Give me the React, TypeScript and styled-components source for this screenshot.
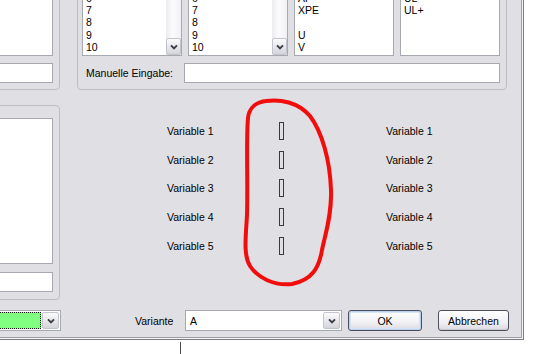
import React from "react";
import styled, { createGlobalStyle } from "styled-components";

const GlobalStyle = createGlobalStyle`
  html, body { margin: 0; padding: 0; background: #ffffff; }
  body {
    font-family: "Liberation Sans", Arial, sans-serif;
    font-size: 10.5px;
    color: #000;
  }
  #root { width: 537px; height: 354px; overflow: hidden; }
`;

const Page = styled.div`
  width: 537px;
  height: 354px;
  display: flex;
  flex-direction: column;
  overflow: hidden;
  background: #ffffff;
`;

const WindowFrame = styled.div`
  align-self: flex-start;
  padding: 0 1px 1px 0;
  background: #f4f4f6;
  border-right: 1px solid #7c7c82;
  border-bottom: 1px solid #7c7c82;
  flex-shrink: 0;
`;

const Dialog = styled.div`
  position: relative;
  width: 521px;
  height: 337px;
  overflow: hidden;
  background: #e0dfe3;
  border-right: 1px solid #9d9da5;
  border-bottom: 1px solid #9d9da5;
  display: flex;
  flex-direction: column;
`;

const TopSection = styled.div`
  display: flex;
  margin-top: -40px;
  height: 130px;
  flex-shrink: 0;
`;

const MiddleSection = styled.div`
  display: flex;
  margin-top: 15px;
  height: 195px;
  flex-shrink: 0;
`;

const BottomSection = styled.div`
  display: flex;
  align-items: center;
  margin-top: 10px;
  height: 21px;
  flex-shrink: 0;
`;

const GroupBox = styled.div<{ $padTop: number; $padBottom: number }>`
  box-sizing: border-box;
  border: 1px solid #bdbdc4;
  border-radius: 4px;
  display: flex;
  flex-direction: column;
  padding-top: ${(p) => p.$padTop}px;
  padding-bottom: ${(p) => p.$padBottom}px;
`;

const CutGroup = styled(GroupBox)<{ $gap: number }>`
  margin-left: -120px;
  width: 180px;
  padding-right: 6px;
  gap: ${(p) => p.$gap}px;
`;

const MainGroup = styled(GroupBox)`
  margin-left: 17px;
  width: 430px;
  padding-left: 4px;
  padding-right: 6px;
`;

const ListRow = styled.div`
  flex: 1;
  min-height: 0;
  display: grid;
  grid-template-columns: 100px 100px 100px 100px;
  column-gap: 6px;
`;

const ListBox = styled.div`
  box-sizing: border-box;
  display: flex;
  background: #ffffff;
  border: 1px solid #a6a9b0;
  overflow: hidden;
  min-height: 0;
  flex: 1;
`;

const ListItems = styled.div`
  flex: 1;
  display: flex;
  flex-direction: column;
  justify-content: flex-end;
  padding: 0 0 2px 3px;
`;

const Item = styled.div`
  height: 12.25px;
  line-height: 12.25px;
  white-space: pre;
`;

const ScrollTrack = styled.div`
  width: 15px;
  display: flex;
  flex-direction: column;
  justify-content: flex-end;
  background: linear-gradient(to right, #ececf0, #fbfbfc 45%, #f1f1f4);
`;

const ScrollButton = styled.div`
  box-sizing: border-box;
  height: 17px;
  border: 1px solid #c2c5cc;
  border-radius: 2px;
  background: linear-gradient(#fbfbfc, #e6e7ec 55%, #d3d5dc);
  display: flex;
  align-items: center;
  justify-content: center;
`;

const ManualRow = styled.div`
  display: grid;
  grid-template-columns: 102px 1fr;
  align-items: center;
  margin-top: 7px;
  height: 20px;
`;

const ManualLabel = styled.span`
  padding-left: 4px;
  white-space: nowrap;
`;

const TextField = styled.div`
  box-sizing: border-box;
  height: 20px;
  background: #ffffff;
  border: 1px solid #a6a9b0;
`;

const VariablesGrid = styled.div`
  display: grid;
  grid-template-columns: 112px 107px auto;
  grid-auto-rows: 28.75px;
  align-items: center;
  align-content: start;
  margin-left: 107px;
  padding-top: 11.6px;
`;

const VarLabel = styled.span`
  line-height: 12px;
  white-space: nowrap;
`;

const Pin = styled.div`
  box-sizing: border-box;
  width: 5px;
  height: 18px;
  border: 1px solid #3a3a3e;
  background: #e0dfe3;
`;

const ComboBox = styled.div<{ $width: number; $offset?: number }>`
  box-sizing: border-box;
  height: 21px;
  width: ${(p) => p.$width}px;
  margin-left: ${(p) => p.$offset ?? 0}px;
  border: 1px solid #a6a9b0;
  background: #ffffff;
  display: flex;
  padding: 1px;
  gap: 1px;
`;

const ComboField = styled.div<{ $green?: boolean }>`
  box-sizing: border-box;
  flex: 1;
  display: flex;
  align-items: center;
  padding-left: 3px;
  background: ${(p) => (p.$green ? "#80ff80" : "#ffffff")};
  border: ${(p) => (p.$green ? "1px dotted #1a1a1a" : "none")};
`;

const DropButton = styled.div`
  box-sizing: border-box;
  width: 17px;
  border: 1px solid #c2c5cc;
  border-radius: 2px;
  background: linear-gradient(#fbfbfc, #e6e7ec 55%, #d3d5dc);
  display: flex;
  align-items: center;
  justify-content: center;
`;

const FieldLabel = styled.span`
  width: 50px;
  margin-left: 74px;
  white-space: nowrap;
`;

const PushButton = styled.button<{ $width: number; $offset: number; $default?: boolean }>`
  box-sizing: border-box;
  height: 21px;
  width: ${(p) => p.$width}px;
  margin-left: ${(p) => p.$offset}px;
  padding: 0;
  font: inherit;
  color: #000;
  border: 1px solid #4f4f5c;
  border-radius: 3px;
  background: linear-gradient(#ffffff, #f1f1f4 60%, #d9d9e1);
  box-shadow: ${(p) =>
    p.$default ? "inset 0 0 0 1px #b9d1f0, inset 0 0 0 2px #d6e4f7" : "inset 0 -1px 0 #c9c9d2"};
`;

const Overlay = styled.svg`
  position: absolute;
  left: 0;
  top: 0;
  width: 521px;
  height: 337px;
  pointer-events: none;
`;

const Desktop = styled.div`
  flex: 1;
  display: flex;
`;

const BehindEdge = styled.div`
  width: 1px;
  margin: 2px 0 0 180px;
  background: #4a4a4a;
`;

const Chevron = () => (
  <svg width="8" height="6" viewBox="0 0 8 6">
    <polyline points="1,1.4 4,4.4 7,1.4" fill="none" stroke="#3e3e48" strokeWidth="2" />
  </svg>
);

const numbers = ["6", "7", "8", "9", "10"];
const codes = ["AP", "XPE", " ", "U", "V"];
const extras = ["UL", "UL+", " ", " ", " "];

const List = ({ items, scroll }: { items: string[]; scroll?: boolean }) => (
  <ListBox>
    <ListItems>
      {items.map((t, i) => (
        <Item key={i}>{t}</Item>
      ))}
    </ListItems>
    {scroll && (
      <ScrollTrack>
        <ScrollButton>
          <Chevron />
        </ScrollButton>
      </ScrollTrack>
    )}
  </ListBox>
);

const variables = [1, 2, 3, 4, 5];

export default function App() {
  return (
    <>
      <GlobalStyle />
      <Page>
        <WindowFrame>
          <Dialog>
            <TopSection>
              <CutGroup $padTop={8} $padBottom={6} $gap={7}>
                <ListBox />
                <TextField />
              </CutGroup>
              <MainGroup $padTop={8} $padBottom={6}>
                <ListRow>
                  <List items={numbers} scroll />
                  <List items={numbers} scroll />
                  <List items={codes} />
                  <List items={extras} />
                </ListRow>
                <ManualRow>
                  <ManualLabel>Manuelle Eingabe:</ManualLabel>
                  <TextField />
                </ManualRow>
              </MainGroup>
            </TopSection>

            <MiddleSection>
              <CutGroup $padTop={12} $padBottom={7} $gap={8}>
                <ListBox />
                <TextField />
              </CutGroup>
              <VariablesGrid>
                {variables.map((n) => (
                  <React.Fragment key={n}>
                    <VarLabel>Variable {n}</VarLabel>
                    <Pin />
                    <VarLabel>Variable {n}</VarLabel>
                  </React.Fragment>
                ))}
              </VariablesGrid>
            </MiddleSection>

            <BottomSection>
              <ComboBox $width={181} $offset={-120}>
                <ComboField $green />
                <DropButton>
                  <Chevron />
                </DropButton>
              </ComboBox>
              <FieldLabel>Variante</FieldLabel>
              <ComboBox $width={157}>
                <ComboField>A</ComboField>
                <DropButton>
                  <Chevron />
                </DropButton>
              </ComboBox>
              <PushButton $width={74} $offset={6} $default>
                OK
              </PushButton>
              <PushButton $width={71} $offset={16}>
                Abbrechen
              </PushButton>
            </BottomSection>

            <Overlay viewBox="0 0 521 337">
              <path
                d="M266 101 C280 99 298 102 310 116 C322 132 330 160 331 190 C332 215 325 235 322 250 C319 268 312 280 292 284 C274 286 258 278 250 266 C243 255 246 235 247 215 C248 180 246 140 248 118 C249 108 256 102 266 101 Z"
                fill="none"
                stroke="#f20d0d"
                strokeWidth="4"
                strokeLinejoin="round"
                strokeLinecap="round"
              />
            </Overlay>
          </Dialog>
        </WindowFrame>
        <Desktop>
          <BehindEdge />
        </Desktop>
      </Page>
    </>
  );
}
